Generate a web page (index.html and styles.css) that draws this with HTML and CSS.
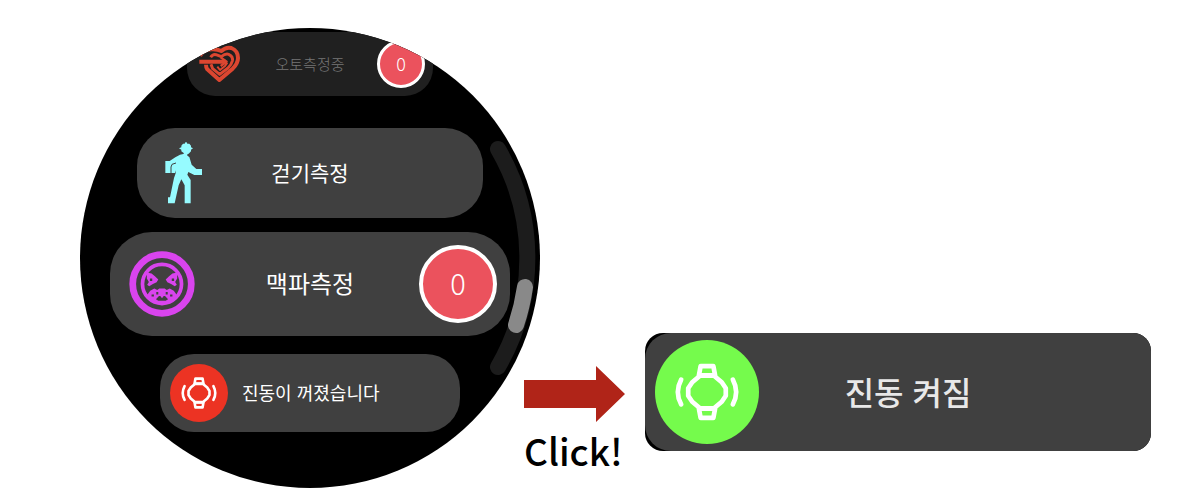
FILE: index.html
```html
<!DOCTYPE html>
<html lang="ko">
<head>
<meta charset="utf-8">
<title>진동 설정</title>
<link rel="stylesheet" href="styles.css">
</head>
<body>
<svg class="defs" aria-hidden="true">
  <symbol id="vibrate" viewBox="0 0 310 310">
    <g fill="none" stroke="#fff" stroke-width="14" stroke-linejoin="round">
      <path d="M135 106h40l24 20 12 18v22l-12 18-24 20h-40l-24-20-12-18v-22l12-18z"/>
      <path d="M131 105l5-27h38l5 27zM131 205l5 27h38l5-27z"/>
      <path stroke-linecap="round" d="M78 118q-20 37 0 74M232 118q20 37 0 74"/>
    </g>
  </symbol>
</svg>
<main class="stage">
  <section class="watch">
    <button class="card card-auto">
      <svg class="icon" viewBox="27 27 126 114" aria-hidden="true">
        <g fill="none" stroke="#dc4630" stroke-linejoin="round">
          <path stroke-width="12" d="M30 60q8-18 34-20 18-1 30 5 14-13 30-9 20 8 20 30 0 16-16 32l-40 34-36-32q-4-6-4-14"/>
          <path stroke-width="9" d="M62 64q6-10 16-8l16 6q12-10 22-7 14 6 11 20-3 12-13 21l-25 19-21-17-5-13"/>
          <path stroke-width="6" d="M82 92l8 10 14-11 8-11"/>
          <path stroke-width="12" d="M28 77h80"/>
          <path stroke-width="7" d="M92 64l18 13-18 13"/>
        </g>
      </svg>
      <span class="label">오토측정중</span>
      <span class="badge">0</span>
    </button>
    <button class="card card-walk">
      <svg class="icon" viewBox="12 9 114 186" aria-hidden="true">
        <path fill="#96fbff" d="M76 10h4l2 4h6l5 6v5l6 3-6 4v5l-7 7-4 2v4l6 4 3 10 4 13 14 13h17v18h-23l-18-9-3 8 10 16v70H74v-54l-10-18-8 18-12 54H24v-18h6l12-58 5-14v-9l-2 8H16V66h13l17-11 14-8 10-2 2-2-8-6v-5l-7-4 7-3v-5l5-6h5z"/>
        <path fill="none" stroke="#404040" stroke-width="3" d="M48 72l-12 4-3 8v18"/>
      </svg>
      <span class="label">걷기측정</span>
    </button>
    <button class="card card-pulse">
      <svg class="icon" viewBox="11 14 196 196" aria-hidden="true">
        <g fill="none" stroke="#d944ee">
          <circle cx="109" cy="112" r="87" stroke-width="20"/>
          <circle cx="109" cy="112" r="58" stroke-width="11"/>
        </g>
        <path fill="#d944ee" d="M64 78l14 3 10 8 10 10-5 8-11 5-11 7-6-5 5-8-6-10zM154 78l-14 3-10 8-10 10 5 8 11 5 11 7 6-5-5-8 6-10zM64 146l10-14 12-7 9 5 6-5h16l6 5 9-5 12 7 10 14-12 14-15 8H91l-15-8z"/>
        <path fill="#404040" d="M73 96h7v7h-7zM138 96h7v7h-7zM92 136h6v7h-6zM120 136h6v7h-6zM78 143h7v6h-7zM133 143h7v6h-7zM91 157l9-9h4l5 6 5-6h4l9 9-7 5H98z"/>
      </svg>
      <span class="label">맥파측정</span>
      <span class="badge">0</span>
    </button>
    <button class="card card-vibration">
      <svg class="icon round" aria-hidden="true"><use href="#vibrate"/></svg>
      <span class="label">진동이 꺼졌습니다</span>
    </button>
    <svg class="scroll" viewBox="0 0 460 460" aria-hidden="true">
      <g fill="none" stroke-width="16" stroke-linecap="round">
        <path stroke="#1c1c1c" d="M418 121A217 217 0 0 1 418 339"/>
        <path stroke="#898989" d="M445 259A217 217 0 0 1 436 297"/>
      </g>
    </svg>
  </section>
  <div class="step">
    <svg class="arrow" viewBox="0 0 101 56" aria-hidden="true"><path fill="#b02418" d="M0 14h72V0l29 28-29 28V42H0z"/></svg>
    <span class="click">Click!</span>
  </div>
  <button class="result">
    <span class="result-face">
      <svg class="icon round" aria-hidden="true"><use href="#vibrate"/></svg>
      <span class="label">진동 켜짐</span>
    </span>
  </button>
</main>
</body>
</html>
```
FILE: styles.css
```css
* { box-sizing: border-box; }
body {
  margin: 0;
  background: #fff;
  font-family: "Noto Sans CJK KR", sans-serif;
}
button {
  border: 0;
  padding: 0;
  font: inherit;
  color: #fff;
  cursor: pointer;
}
.defs { position: absolute; width: 0; height: 0; }
.stage {
  display: flex;
  align-items: flex-start;
  padding: 28px 27px 12px 80px;
}
.watch {
  position: relative;
  flex: none;
  width: 460px;
  aspect-ratio: 1;
  padding-top: 4px;
  border-radius: 50%;
  overflow: hidden;
  background: #000;
  display: flex;
  flex-direction: column;
  align-items: center;
}
.icon { display: block; flex: none; }
.round { border-radius: 50%; }
.card {
  flex: none;
  display: grid;
  grid-template-columns: 1fr auto 1fr;
  align-items: center;
  background: #404040;
}
.label {
  padding-bottom: 2px;
  white-space: nowrap;
  line-height: 1;
}
.badge {
  justify-self: end;
  display: flex;
  align-items: center;
  justify-content: center;
  padding-bottom: 3px;
  border: 4px solid #fff;
  border-radius: 50%;
  background: #eb525d;
  font-weight: 300;
  line-height: 1;
}
.card-auto {
  width: 246px;
  height: 64px;
  padding: 0 8px;
  margin-bottom: 32px;
  border-radius: 28px;
  background: #202020;
}
.card-auto .icon { width: 42px; height: 38px; margin-left: 4px; }
.card-auto .label { font-size: 15px; font-weight: 300; color: #777; }
.card-auto .badge { width: 48px; height: 48px; border-width: 3px; font-size: 18px; }
.card-walk {
  width: 346px;
  height: 90px;
  padding: 0 27px;
  margin-bottom: 14px;
  border-radius: 38px;
}
.card-walk .icon { width: 38px; height: 62px; }
.card-walk .label { font-size: 21px; }
.card-pulse {
  width: 400px;
  height: 104px;
  padding: 0 13px;
  margin-bottom: 18px;
  border-radius: 42px;
}
.card-pulse .icon { width: 66px; height: 66px; margin-left: 6px; }
.card-pulse .label { font-size: 24px; }
.card-pulse .badge { width: 78px; height: 78px; font-size: 29px; }
.card-vibration {
  width: 300px;
  height: 78px;
  padding: 0 10px;
  border-radius: 34px;
  display: flex;
  gap: 14px;
}
.card-vibration .icon { width: 58px; height: 58px; background: #ec3323; }
.card-vibration .label { font-size: 18px; }
.scroll {
  position: absolute;
  inset: 0;
  width: 100%;
  height: 100%;
  pointer-events: none;
}
.step {
  position: relative;
  flex: none;
  width: 101px;
  margin: 338px 20px 0 -16px;
}
.arrow { display: block; width: 101px; height: 56px; }
.click {
  display: block;
  margin-top: 6px;
  font-size: 37px;
  font-weight: 500;
  line-height: 44px;
  color: #000;
}
.result {
  flex: 1;
  min-width: 320px;
  margin-top: 305px;
  border-radius: 18px;
  overflow: hidden;
  background: #000;
}
.result-face {
  display: grid;
  grid-template-columns: auto 1fr;
  align-items: center;
  padding: 7px 94px 7px 10px;
  border-radius: 26px 0 0 26px;
  background: #404040;
}
.result .icon { width: 104px; height: 104px; background: #75fb4c; }
.result .label { font-size: 32px; font-weight: 500; color: #e8e8e8; }
```
